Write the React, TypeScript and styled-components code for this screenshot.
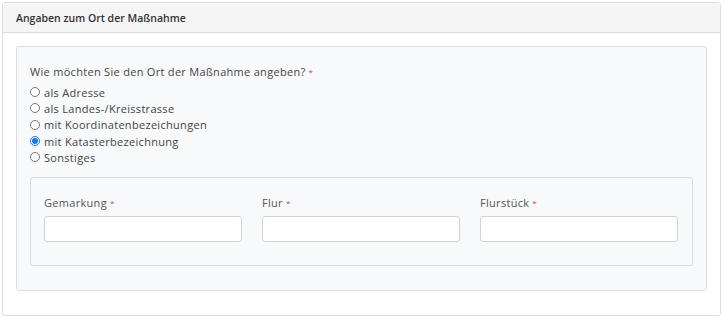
import React from "react";
import styled, { createGlobalStyle } from "styled-components";

const Global = createGlobalStyle`
  html, body { margin: 0; padding: 0; background: #fff; }
  body { font-family: "Open Sans", "Liberation Sans", sans-serif; color: #444; }
  * { box-sizing: border-box; }
`;

const Card = styled.div`
  margin: 2px 4px 4px 2px;
  border: 1px solid #dedede;
  border-radius: 3px;
  display: flex;
  flex-direction: column;
`;

const CardHeader = styled.div`
  flex: 0 0 30px;
  height: 30px;
  background: #f5f5f5;
  border-bottom: 1px solid #dddddd;
  display: flex;
  align-items: center;
  padding-left: 13px;
  font-size: 10.5px;
  font-weight: 600;
  color: #333;
`;

const CardBody = styled.div`
  padding: 13px 13px 24px 13px;
  display: flex;
`;

const Panel = styled.div<{ $pt: number; $pb: number }>`
  flex: 1;
  background: #f8f9fa;
  border: 1px solid #dcdcdc;
  border-radius: 3px;
  padding: ${(p) => p.$pt}px 13px ${(p) => p.$pb}px 13px;
  display: flex;
  flex-direction: column;
`;

const Question = styled.div`
  font-size: 11px;
  letter-spacing: 0.3px;
  line-height: 14px;
  color: #444;
  margin-bottom: 5px;
`;

const Req = styled.span`
  color: #e0393e;
  font-size: 8px;
  vertical-align: top;
  margin-left: 3px;
`;

const RadioRow = styled.label`
  display: flex;
  align-items: center;
  height: 16.3px;
  font-size: 11px;
  letter-spacing: 0.3px;
  color: #444;
`;

const Radio = styled.input`
  width: 10px;
  height: 10px;
  margin: 0 4px 0 0;
  accent-color: #1a73e8;
`;

const SubPanel = styled(Panel)`
  margin-top: 12px;
  flex: 0 0 auto;
  padding-right: 14px;
`;

const Grid = styled.div`
  display: grid;
  grid-template-columns: repeat(3, 1fr);
  column-gap: 20px;
`;

const Field = styled.div`
  display: flex;
  flex-direction: column;
`;

const FieldLabel = styled.div`
  font-size: 11px;
  letter-spacing: 0.3px;
  line-height: 14px;
  color: #555;
  margin-bottom: 6px;
`;

const TextInput = styled.input`
  height: 26px;
  border: 1px solid #cfd3d8;
  border-radius: 3px;
  background: #fff;
  outline: none;
`;

const options = [
  "als Adresse",
  "als Landes-/Kreisstrasse",
  "mit Koordinatenbezeichungen",
  "mit Katasterbezeichnung",
  "Sonstiges",
];

export default function App() {
  return (
    <>
      <Global />
      <Card>
        <CardHeader>Angaben zum Ort der Maßnahme</CardHeader>
        <CardBody>
          <Panel $pt={18} $pb={24}>
            <Question>
              Wie möchten Sie den Ort der Maßnahme angeben?<Req>*</Req>
            </Question>
            {options.map((o, i) => (
              <RadioRow key={o}>
                <Radio type="radio" name="ort" defaultChecked={i === 3} />
                {o}
              </RadioRow>
            ))}
            <SubPanel $pt={18} $pb={23}>
              <Grid>
                {["Gemarkung", "Flur", "Flurstück"].map((l) => (
                  <Field key={l}>
                    <FieldLabel>
                      {l}
                      <Req>*</Req>
                    </FieldLabel>
                    <TextInput type="text" />
                  </Field>
                ))}
              </Grid>
            </SubPanel>
          </Panel>
        </CardBody>
      </Card>
    </>
  );
}
